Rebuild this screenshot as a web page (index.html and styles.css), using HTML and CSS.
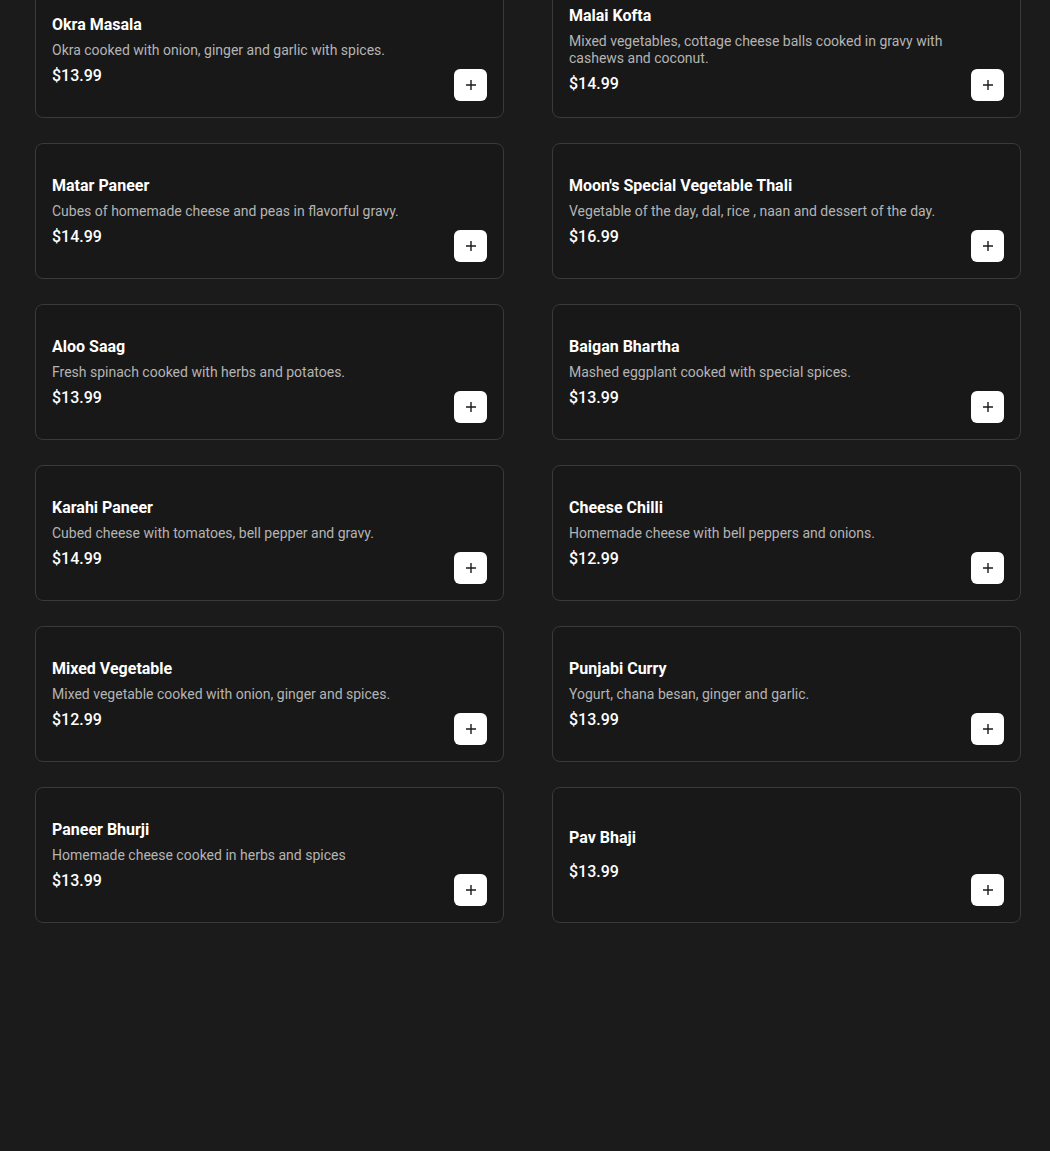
FILE: index.html
```html
<html>
  <head>
    <title>Menu</title>
    <meta name="viewport" content="width=device-width, initial-scale=1">
    <link rel="stylesheet" href="styles.css">
  </head>
  <body>
    <ul class="menu">
      <li class="item">
        <div class="info">
          <h3 class="name">Okra Masala</h3>
          <p class="desc">Okra cooked with onion, ginger and garlic with spices.</p>
          <div class="price">$13.99</div>
        </div>
        <button class="add"><svg width="12" height="12" viewBox="0 0 12 12"><path d="M6 1v10M1 6h10" stroke="#1b1b1b" stroke-width="1.4"/></svg></button>
      </li>
      <li class="item">
        <div class="info">
          <h3 class="name">Malai Kofta</h3>
          <p class="desc">Mixed vegetables, cottage cheese balls cooked in gravy with cashews and coconut.</p>
          <div class="price">$14.99</div>
        </div>
        <button class="add"><svg width="12" height="12" viewBox="0 0 12 12"><path d="M6 1v10M1 6h10" stroke="#1b1b1b" stroke-width="1.4"/></svg></button>
      </li>
      <li class="item">
        <div class="info">
          <h3 class="name">Matar Paneer</h3>
          <p class="desc">Cubes of homemade cheese and peas in flavorful gravy.</p>
          <div class="price">$14.99</div>
        </div>
        <button class="add"><svg width="12" height="12" viewBox="0 0 12 12"><path d="M6 1v10M1 6h10" stroke="#1b1b1b" stroke-width="1.4"/></svg></button>
      </li>
      <li class="item">
        <div class="info">
          <h3 class="name">Moon's Special Vegetable Thali</h3>
          <p class="desc">Vegetable of the day, dal, rice , naan and dessert of the day.</p>
          <div class="price">$16.99</div>
        </div>
        <button class="add"><svg width="12" height="12" viewBox="0 0 12 12"><path d="M6 1v10M1 6h10" stroke="#1b1b1b" stroke-width="1.4"/></svg></button>
      </li>
      <li class="item">
        <div class="info">
          <h3 class="name">Aloo Saag</h3>
          <p class="desc">Fresh spinach cooked with herbs and potatoes.</p>
          <div class="price">$13.99</div>
        </div>
        <button class="add"><svg width="12" height="12" viewBox="0 0 12 12"><path d="M6 1v10M1 6h10" stroke="#1b1b1b" stroke-width="1.4"/></svg></button>
      </li>
      <li class="item">
        <div class="info">
          <h3 class="name">Baigan Bhartha</h3>
          <p class="desc">Mashed eggplant cooked with special spices.</p>
          <div class="price">$13.99</div>
        </div>
        <button class="add"><svg width="12" height="12" viewBox="0 0 12 12"><path d="M6 1v10M1 6h10" stroke="#1b1b1b" stroke-width="1.4"/></svg></button>
      </li>
      <li class="item">
        <div class="info">
          <h3 class="name">Karahi Paneer</h3>
          <p class="desc">Cubed cheese with tomatoes, bell pepper and gravy.</p>
          <div class="price">$14.99</div>
        </div>
        <button class="add"><svg width="12" height="12" viewBox="0 0 12 12"><path d="M6 1v10M1 6h10" stroke="#1b1b1b" stroke-width="1.4"/></svg></button>
      </li>
      <li class="item">
        <div class="info">
          <h3 class="name">Cheese Chilli</h3>
          <p class="desc">Homemade cheese with bell peppers and onions.</p>
          <div class="price">$12.99</div>
        </div>
        <button class="add"><svg width="12" height="12" viewBox="0 0 12 12"><path d="M6 1v10M1 6h10" stroke="#1b1b1b" stroke-width="1.4"/></svg></button>
      </li>
      <li class="item">
        <div class="info">
          <h3 class="name">Mixed Vegetable</h3>
          <p class="desc">Mixed vegetable cooked with onion, ginger and spices.</p>
          <div class="price">$12.99</div>
        </div>
        <button class="add"><svg width="12" height="12" viewBox="0 0 12 12"><path d="M6 1v10M1 6h10" stroke="#1b1b1b" stroke-width="1.4"/></svg></button>
      </li>
      <li class="item">
        <div class="info">
          <h3 class="name">Punjabi Curry</h3>
          <p class="desc">Yogurt, chana besan, ginger and garlic.</p>
          <div class="price">$13.99</div>
        </div>
        <button class="add"><svg width="12" height="12" viewBox="0 0 12 12"><path d="M6 1v10M1 6h10" stroke="#1b1b1b" stroke-width="1.4"/></svg></button>
      </li>
      <li class="item">
        <div class="info">
          <h3 class="name">Paneer Bhurji</h3>
          <p class="desc">Homemade cheese cooked in herbs and spices</p>
          <div class="price">$13.99</div>
        </div>
        <button class="add"><svg width="12" height="12" viewBox="0 0 12 12"><path d="M6 1v10M1 6h10" stroke="#1b1b1b" stroke-width="1.4"/></svg></button>
      </li>
      <li class="item">
        <div class="info">
          <h3 class="name">Pav Bhaji</h3>
          <p class="desc"></p>
          <div class="price">$13.99</div>
        </div>
        <button class="add"><svg width="12" height="12" viewBox="0 0 12 12"><path d="M6 1v10M1 6h10" stroke="#1b1b1b" stroke-width="1.4"/></svg></button>
      </li>
    </ul>
  </body>
</html>
```

FILE: styles.css
```css
body {
  margin: 0;
  background: #1b1b1b;
  font-family: Roboto, "Liberation Sans", sans-serif;
  color: #fff;
}
.menu {
  display: grid;
  grid-template-columns: 469px 469px;
  column-gap: 48px;
  row-gap: 25px;
  margin: -18px 0 0 0;
  padding: 0 0 0 35px;
  list-style-type: none;
}
.item {
  display: flex;
  gap: 16px;
  box-sizing: border-box;
  height: 136px;
  padding: 16px;
  background: #181818;
  border: 1px solid #3a3a3a;
  border-radius: 8px;
}
.info {
  flex: 1;
  align-self: center;
  display: flex;
  flex-direction: column;
}
.name {
  margin: 0 0 6px 0;
  font-size: 16px;
  line-height: 22px;
  font-weight: 700;
}
.desc {
  margin: 0 0 6px 0;
  font-size: 14px;
  line-height: 17px;
  color: #b4b4b4;
}
.price {
  font-size: 16px;
  line-height: 22px;
  font-weight: 500;
}
.add {
  align-self: flex-end;
  display: flex;
  align-items: center;
  justify-content: center;
  flex-shrink: 0;
  width: 33px;
  height: 32px;
  padding: 0;
  background: #fff;
  border: none;
  border-radius: 6px;
}
```
